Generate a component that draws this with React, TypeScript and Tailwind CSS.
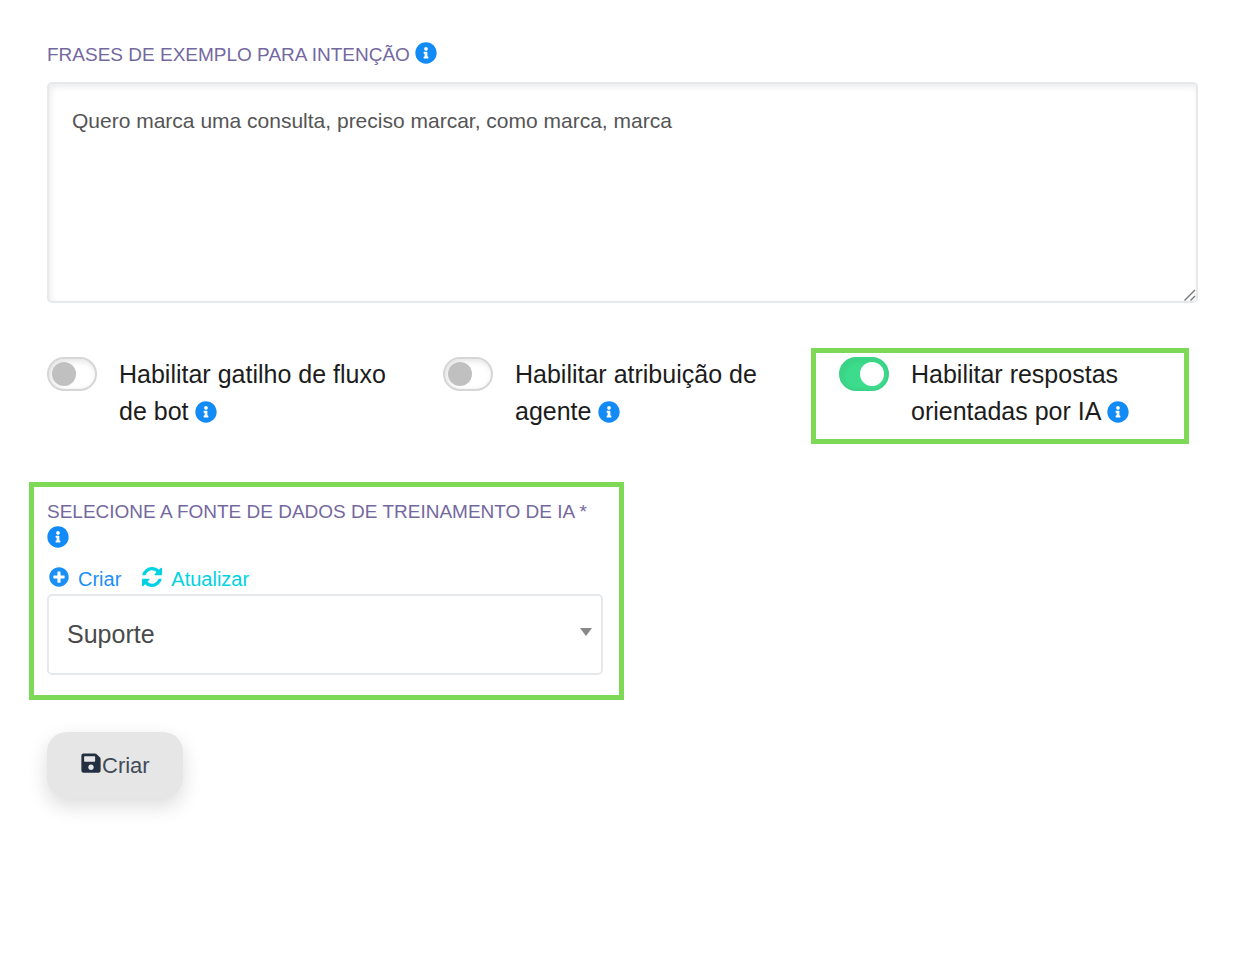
import { useState } from "react";
import type { ReactNode } from "react";
import { FaInfoCircle, FaPlusCircle, FaSave } from "react-icons/fa";

function Info() {
  return <FaInfoCircle aria-hidden="true" className="inline size-[22px] align-[-3px] text-[#128bf7]" />;
}

function RefreshIcon() {
  return (
    <svg aria-hidden="true" viewBox="0 0 1536 1536" className="mb-1 size-5 fill-current">
      <path d="M1511 928q0 5-1 7-64 268-268 434.5T764 1536q-146 0-282.5-55T238 1324l-129 129q-19 19-45 19t-45-19-19-45V960q0-26 19-45t45-19h448q26 0 45 19t19 45-19 45l-137 137q71 66 161 102t187 36q134 0 250-65t186-179q11-17 53-117 8-23 30-23h192q13 0 22.5 9.5t9.5 22.5zm25-800v448q0 26-19 45t-45 19h-448q-26 0-45-19t-19-45 19-45l138-138Q969 256 768 256q-134 0-250 65T332 500q-11 17-53 117-8 23-30 23H50q-13 0-22.5-9.5T18 608v-7q65-268 270-434.5T768 0q146 0 284 55.5T1297 212l130-129q19-19 45-19t45 19 19 45z" />
    </svg>
  );
}

type ToggleProps = {
  id: string;
  defaultChecked?: boolean;
  highlighted?: boolean;
  children: ReactNode;
};

function Toggle({ id, defaultChecked, highlighted, children }: ToggleProps) {
  const [on, setOn] = useState(!!defaultChecked);
  return (
    <div
      className={`flex items-start gap-[22px] border-[5px] pt-[3px] pb-[9px] pl-[23px] ${
        highlighted ? "border-[#7ed957]" : "border-transparent"
      }`}
    >
      <span className="relative mt-px flex h-[34px] w-[50px] shrink-0">
        <input
          id={id}
          type="checkbox"
          role="switch"
          checked={on}
          onChange={(e) => setOn(e.target.checked)}
          className="peer size-full cursor-pointer appearance-none rounded-full border-2 border-[#d6d6d6] bg-white shadow-[inset_2px_2px_6px_rgba(0,0,0,0.12)] checked:border-[#3ad388] checked:bg-[#3ddc8c] checked:shadow-[inset_2px_2px_6px_rgba(0,0,0,0.06)]"
        />
        <span className="pointer-events-none absolute top-[5px] left-[5px] size-6 rounded-full bg-[#c0c0c0] peer-checked:right-[5px] peer-checked:left-auto peer-checked:bg-white" />
      </span>
      <label htmlFor={id} className="text-[25px] leading-[37px] text-[#1c1c1c]">
        {children} <Info />
      </label>
    </div>
  );
}

export default function App() {
  return (
    <main className="min-h-screen bg-white pt-[41px] pb-40 font-['Liberation_Sans',Arial,sans-serif]">
      <form onSubmit={(e) => e.preventDefault()}>
        <div className="pr-[50px] pl-[47px]">
          <label htmlFor="frases" className="block text-[19px] leading-[27px] text-[#7468a0]">
            FRASES DE EXEMPLO PARA INTENÇÃO <Info />
          </label>
          <div className="relative mt-[14px]">
            <textarea
              id="frases"
              defaultValue="Quero marca uma consulta, preciso marcar, como marca, marca"
              className="block h-[221px] w-full resize-none rounded-[5px] border-2 border-[#e6e9ec] px-[23px] py-[22px] text-[21px] leading-[30px] text-[#555] shadow-[inset_2px_3px_6px_rgba(0,0,0,0.08)] outline-none"
            />
            <svg
              aria-hidden="true"
              viewBox="0 0 12 12"
              className="pointer-events-none absolute right-[2px] bottom-[2px] size-3 stroke-[#777]"
              strokeWidth="1.4"
            >
              <path d="M0.5 11.5L11 1M6.5 11.5L11 7" />
            </svg>
          </div>
        </div>

        <div className="mt-[45px] mr-[59px] ml-[19px] grid grid-cols-3 gap-[18px]">
          <Toggle id="fluxo">Habilitar gatilho de fluxo de bot</Toggle>
          <Toggle id="agente">Habilitar atribuição de agente</Toggle>
          <Toggle id="ia" defaultChecked highlighted>
            Habilitar respostas orientadas por IA
          </Toggle>
        </div>

        <section className="mt-[38px] ml-[29px] max-w-[595px] border-[5px] border-[#7ed957] pt-[11px] pr-4 pb-5 pl-[13px]">
          <label htmlFor="fonte" className="block text-[19px] leading-[27px] text-[#7468a0]">
            SELECIONE A FONTE DE DADOS DE TREINAMENTO DE IA * <Info />
          </label>
          <div className="mt-3 flex gap-[21px] text-xl leading-[30px]">
            <button type="button" className="flex items-center gap-[9px] pl-[2px] text-[#1a8ff5]">
              <FaPlusCircle aria-hidden="true" className="mb-1 size-5" />
              Criar
            </button>
            <button type="button" className="flex items-center gap-[9px] text-[#00d2e2]">
              <RefreshIcon />
              Atualizar
            </button>
          </div>
          <div className="relative">
            <select
              id="fonte"
              className="block h-[81px] w-full appearance-none rounded-[5px] border-2 border-[#e6e9ec] bg-white px-[18px] text-[25px] text-[#4a4a4a] outline-none"
            >
              <option>Suporte</option>
            </select>
            <svg
              aria-hidden="true"
              viewBox="0 0 12 8"
              className="pointer-events-none absolute top-[34px] right-[11px] h-2 w-3 fill-[#888]"
            >
              <path d="M0 0H12L6 8Z" />
            </svg>
          </div>
        </section>

        <button
          type="submit"
          className="mt-8 ml-[47px] flex h-[66px] items-center rounded-[20px] bg-[#e6e6e6] px-[33px] text-[22px] text-[#414b58] shadow-[0_8px_20px_rgba(0,0,0,0.14)]"
        >
          <FaSave aria-hidden="true" className="mb-1 size-[22px] text-[#243042]" />
          Criar
        </button>
      </form>
    </main>
  );
}
